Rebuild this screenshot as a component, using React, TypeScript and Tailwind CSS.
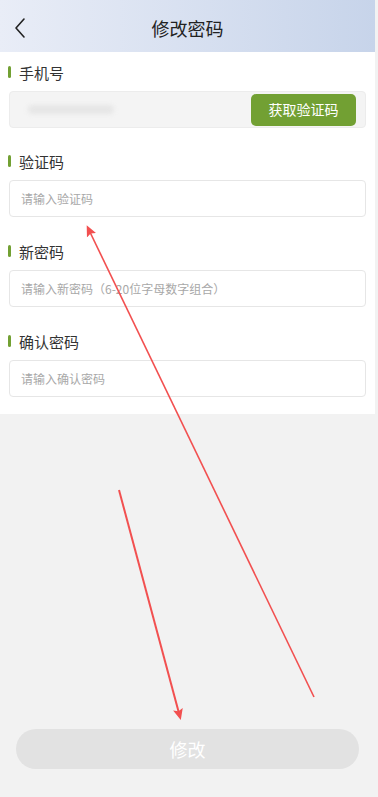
import React from 'react';

const font = { fontFamily: '"Noto Sans CJK SC", "Noto Sans", sans-serif' };

function Label({ text }: { text: string }) {
  return (
    <div className="flex items-center h-[20px] pl-[8px]">
      <span className="w-[3px] h-[12px] rounded-full bg-[#72a033]" />
      <span className="ml-[8px] text-[15px] text-[#333333] leading-none">{text}</span>
    </div>
  );
}

function Field({ placeholder }: { placeholder: string }) {
  return (
    <div className="mx-[9px] mt-[9px] h-[37px] rounded-[4px] border border-[#e6e6e6] bg-white flex items-center px-[11px]">
      <span className="text-[12px] text-[#a8a8a8] leading-none">{placeholder}</span>
    </div>
  );
}

export default function App() {
  return (
    <div className="relative w-[378px] h-[797px] bg-[#f2f2f2] overflow-hidden" style={font}>
      <div className="w-[375px]">
        <header className="h-[52px] bg-gradient-to-r from-[#e9edf7] to-[#c7d4ea] flex items-center relative">
          <svg className="absolute left-[13px] top-[17px]" width="14" height="22" viewBox="0 0 14 22" fill="none">
            <path d="M11 2 L3 11 L11 20" stroke="#222" strokeWidth="1.6" strokeLinecap="round" strokeLinejoin="round" />
          </svg>
          <h1 className="w-full text-center text-[18px] text-[#222] pt-[4px]">修改密码</h1>
        </header>

        <section className="bg-white pb-[17px]">
          <div className="pt-[10px]">
            <Label text="手机号" />
            <div className="mx-[9px] mt-[9px] h-[37px] rounded-[4px] border border-[#ececec] bg-[#f4f4f4] flex items-center justify-between pl-[18px] pr-[9px]">
              <span className="w-[86px] h-[9px] rounded-full bg-[#e6e6e6] blur-[2px]" />
              <button className="w-[105px] h-[32px] rounded-[5px] bg-[#72a033] text-white text-[14px]">获取验证码</button>
            </div>
          </div>

          <div className="pt-[23px]">
            <Label text="验证码" />
            <Field placeholder="请输入验证码" />
          </div>

          <div className="pt-[24px]">
            <Label text="新密码" />
            <Field placeholder="请输入新密码（6-20位字母数字组合）" />
          </div>

          <div className="pt-[24px]">
            <Label text="确认密码" />
            <Field placeholder="请输入确认密码" />
          </div>
        </section>

        <div className="mt-[315px] px-[16px]">
          <button className="w-full h-[40px] rounded-full bg-[#e2e2e2] text-white text-[18px]">修改</button>
        </div>
      </div>

      <svg className="absolute inset-0 pointer-events-none" width="378" height="797" viewBox="0 0 378 797">
        <defs>
          <marker id="ah" markerWidth="12" markerHeight="12" refX="8" refY="6" orient="auto" markerUnits="userSpaceOnUse">
            <path d="M0 1 L11 6 L0 11 L2 6 Z" fill="#f25050" />
          </marker>
        </defs>
        <line x1="314" y1="697" x2="88" y2="228" stroke="#f25050" strokeWidth="1.6" markerEnd="url(#ah)" />
        <line x1="119" y1="490" x2="180" y2="717" stroke="#f25050" strokeWidth="2" markerEnd="url(#ah)" />
      </svg>
    </div>
  );
}
